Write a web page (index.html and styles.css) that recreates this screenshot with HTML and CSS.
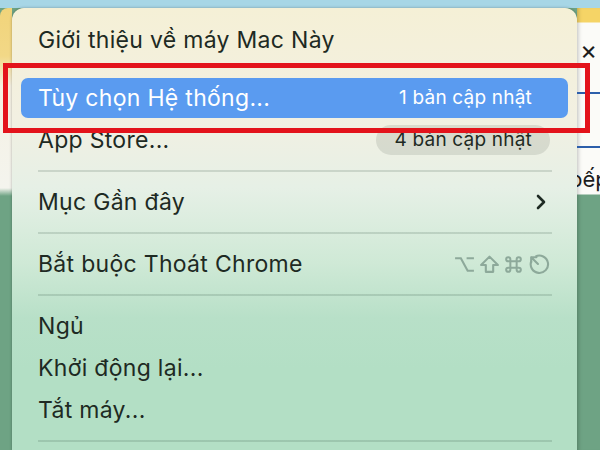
FILE: index.html
```html
<!DOCTYPE html>
<html lang="vi">
<head>
    <meta charset="UTF-8">
    <title>Menu Apple</title>
    <link rel="stylesheet" href="styles.css">
</head>
<body>
    <div class="screen">
        <div class="topbar"></div>
        <div class="desk">
            <div class="side side-left"></div>

            <div class="menu">
                <div class="item">Giới thiệu về máy Mac Này</div>
                <div class="sep sep-first"></div>
                <div class="item active">
                    <span>Tùy chọn Hệ thống...</span>
                    <span class="badge">1 bản cập nhật</span>
                </div>
                <div class="item">
                    <span>App Store...</span>
                    <span class="badge">4 bản cập nhật</span>
                </div>
                <div class="sep"></div>
                <div class="item">
                    <span>Mục Gần đây</span>
                    <svg class="chevron" width="10" height="16" viewBox="0 0 10 16">
                        <path d="M2 2 L8 8 L2 14" fill="none" stroke="#1e2a23" stroke-width="2.6" stroke-linecap="round" stroke-linejoin="round"/>
                    </svg>
                </div>
                <div class="sep"></div>
                <div class="item">
                    <span>Bắt buộc Thoát Chrome</span>
                    <span class="keys">
                        <!-- option -->
                        <svg width="23" height="21" viewBox="0 0 22 20">
                            <path d="M2 4 H7.5 L14 16 H20 M13 4 H20" fill="none" stroke="currentColor" stroke-width="2"/>
                        </svg>
                        <!-- shift -->
                        <svg width="21" height="21" viewBox="0 0 20 20">
                            <path d="M10 2.5 L18 10.5 H13.5 V17 H6.5 V10.5 H2 Z" fill="none" stroke="currentColor" stroke-width="2" stroke-linejoin="round"/>
                        </svg>
                        <!-- command -->
                        <svg width="21" height="21" viewBox="0 0 20 20">
                            <path d="M7 7 H13 V13 H7 Z M7 7 V5 A2 2 0 1 0 5 7 H7 M13 7 V5 A2 2 0 1 1 15 7 H13 M13 13 V15 A2 2 0 1 0 15 13 H13 M7 13 V15 A2 2 0 1 1 5 13 H7" fill="none" stroke="currentColor" stroke-width="1.9"/>
                        </svg>
                        <!-- escape -->
                        <svg width="23" height="23" viewBox="0 0 22 22">
                            <path d="M4.2 7.5 A8.3 8.3 0 1 0 8 3.4" fill="none" stroke="currentColor" stroke-width="2"/>
                            <path d="M4 4 L10.5 10.5 M4 4 H9 M4 4 V9" fill="none" stroke="currentColor" stroke-width="2" stroke-linecap="round"/>
                        </svg>
                    </span>
                </div>
                <div class="sep"></div>
                <div class="item">Ngủ</div>
                <div class="item">Khởi động lại...</div>
                <div class="item">Tắt máy...</div>
                <div class="sep"></div>
            </div>

            <div class="side side-right">
                <div class="close">×</div>
                <div class="rule"></div>
                <div class="rule"></div>
                <div class="word">bếp</div>
            </div>
        </div>

        <div class="callout"></div>
    </div>
</body>
</html>
```

FILE: styles.css
```css
body {
    margin: 0;
    font-family: Inter, "Liberation Sans", sans-serif;
}
.screen {
    position: relative;
    width: 600px;
    height: 450px;
    overflow: hidden;
    background-color: #6ea384;
}
.topbar {
    height: 8px;
    background-color: #a7d6e6;
}
.desk {
    display: grid;
    grid-template-columns: 12px 565px 1fr;
    height: 442px;
}
.side-left {
    border-top-left-radius: 8px;
    background: linear-gradient(to bottom, #f1d47a 0, #f2d887 48px, #f5f1e3 78px, #f4f4ee 180px, #6ea384 188px);
}
.side-right {
    overflow: hidden;
    background: linear-gradient(to bottom, #f5d466 0, #f5d466 14px, #fbfbf8 15px, #fbfbf8 186px, #6ea384 187px);
    box-shadow: inset 4px 0 4px -3px rgba(0,0,0,0.25);
}
.close {
    margin: 29px 0 0 3px;
    font-size: 26px;
    line-height: 26px;
    color: #1d1d1d;
}
.rule {
    height: 2px;
    margin-top: 29px;
    background-color: #2d5fab;
}
.rule + .rule {
    margin-top: 52px;
}
.word {
    margin: 18px 0 0 -8px;
    font-size: 22px;
    color: #1d1d1d;
    white-space: nowrap;
}

.menu {
    padding: 11px 9px 0;
    border-radius: 12px 12px 0 0;
    background: linear-gradient(to bottom, #f5f0d6 0, #f2f0e2 110px, #e6f0e6 180px, #cfe9d6 255px, #b8e0c8 310px, #b3dfc5 360px);
    box-shadow: 0 0 3px rgba(0,0,0,0.3);
    color: #1e2a23;
}
.item {
    display: flex;
    align-items: center;
    justify-content: space-between;
    height: 42px;
    padding: 0 18px 0 17px;
    border-radius: 7px;
    font-size: 23px;
    letter-spacing: 0.3px;
}
.item.active {
    height: 40px;
    margin: 1px 0;
    background-color: #5a9bf0;
    color: #fff;
}
.badge {
    padding: 0 18px;
    height: 30px;
    line-height: 30px;
    border-radius: 15px;
    background-color: rgba(60,70,65,0.13);
    font-size: 19px;
    letter-spacing: 0.2px;
}
.item.active .badge {
    background-color: transparent;
}
.sep {
    height: 20px;
    margin: 0 16px 0 17px;
    background: linear-gradient(to bottom, transparent 9px, rgba(40,70,55,0.16) 9px, rgba(40,70,55,0.16) 11px, transparent 11px);
}
.sep-first {
    height: 16px;
    background: linear-gradient(to bottom, transparent 4px, rgba(40,70,55,0.16) 4px, rgba(40,70,55,0.16) 6px, transparent 6px);
}
.chevron {
    margin-right: 4px;
}
.keys {
    display: flex;
    align-items: center;
    gap: 3px;
    color: #8da99a;
}

.callout {
    position: absolute;
    left: 3px;
    top: 63px;
    width: 577px;
    height: 60px;
    border: 5px solid #e3131b;
}
```
